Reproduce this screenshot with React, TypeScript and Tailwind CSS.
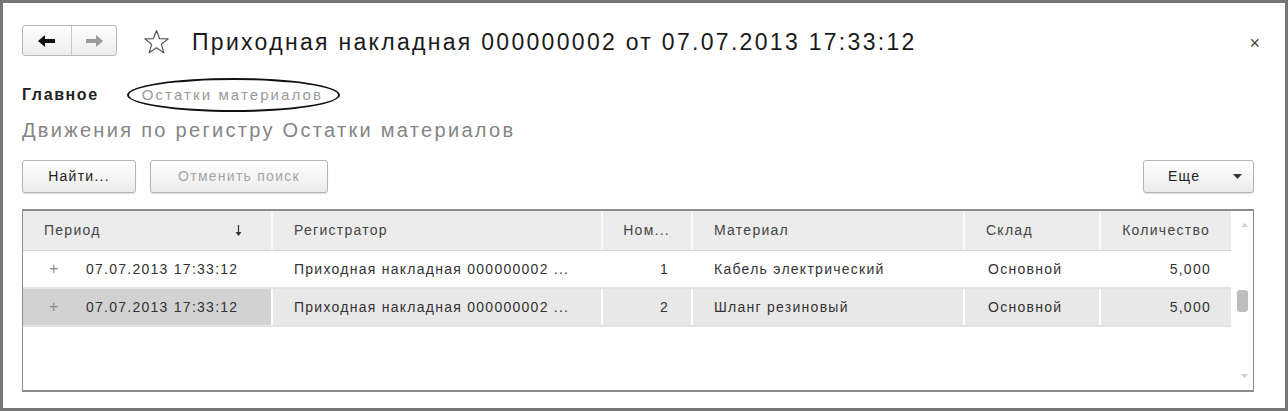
import React from 'react';

const cols = [
  { title: 'Период', w: 'w-[248px]', align: 'left' },
  { title: 'Регистратор', w: 'w-[330px]', align: 'left' },
  { title: 'Ном...', w: 'w-[90px]', align: 'right' },
  { title: 'Материал', w: 'w-[272px]', align: 'left' },
  { title: 'Склад', w: 'w-[136px]', align: 'left' },
  { title: 'Количество', w: 'w-[132px]', align: 'right' },
];

const rows = [
  { period: '07.07.2013 17:33:12', reg: 'Приходная накладная 000000002 ...', n: '1', mat: 'Кабель электрический', sklad: 'Основной', qty: '5,000', selected: false },
  { period: '07.07.2013 17:33:12', reg: 'Приходная накладная 000000002 ...', n: '2', mat: 'Шланг резиновый', sklad: 'Основной', qty: '5,000', selected: true },
];

const btnBase =
  'h-[33px] flex items-center border border-[#b4b4b4] rounded-[3px] bg-gradient-to-b from-white to-[#ececec] shadow-[0_1px_1px_rgba(0,0,0,0.12)] text-[14px] tracking-[0.09em]';

const App = () => {
  return (
    <div className="w-[1288px] h-[411px] bg-white border-[3px] border-[#777] font-['Liberation_Sans',Arial,sans-serif] text-[#333]">
      <div className="pt-[22px] pl-[19px] pr-[31px]">
        {/* Header */}
        <div className="flex items-center h-[31px]">
          <div className="flex h-[31px] w-[95px] border border-[#b8b8b8] rounded-[3px] bg-gradient-to-b from-white to-[#ececec]">
            <div className="w-[49px] flex items-center justify-center border-r border-[#c8c8c8]">
              <svg width="18" height="12" viewBox="0 0 18 12">
                <path d="M0 6 L7 0 L7 4 L17 4 L17 8 L7 8 L7 12 Z" fill="#111" />
              </svg>
            </div>
            <div className="flex-1 flex items-center justify-center">
              <svg width="18" height="12" viewBox="0 0 18 12">
                <path d="M18 6 L11 0 L11 4 L1 4 L1 8 L11 8 L11 12 Z" fill="#9a9a9a" />
              </svg>
            </div>
          </div>
          <svg width="27" height="26" viewBox="0 0 27 26" className="ml-[26px] mt-[2px]">
            <path
              d="M13.5 1.5 L16.6 9.6 L25.2 9.9 L18.4 15.3 L20.8 23.7 L13.5 18.8 L6.2 23.7 L8.6 15.3 L1.8 9.9 L10.4 9.6 Z"
              fill="none"
              stroke="#555"
              strokeWidth="1.2"
              strokeLinejoin="round"
            />
          </svg>
          <h1 className="ml-[22px] mt-[4px] text-[23px] tracking-[0.1em] text-[#1a1a1a] leading-none">
            Приходная накладная 000000002 от 07.07.2013 17:33:12
          </h1>
          <span className="ml-auto mt-[4px] text-[18px] text-[#444] leading-none mr-[-6px]">×</span>
        </div>

        {/* Tabs */}
        <div className="flex items-center h-[34px] mt-[22px]">
          <span className="text-[16px] font-bold tracking-[0.1em] text-[#222]">Главное</span>
          <span className="ml-[28px] h-[34px] pl-[13px] pr-[15px] flex items-center border-2 border-[#111] rounded-[50%] text-[15px] tracking-[0.14em] text-[#9a9a9a]">
            Остатки материалов
          </span>
        </div>

        <div className="mt-[7px] text-[20px] leading-[22px] tracking-[0.115em] text-[#858585]">
          Движения по регистру Остатки материалов
        </div>

        {/* Toolbar */}
        <div className="flex mt-[19px]">
          <button className={`${btnBase} w-[114px] justify-center text-[#222]`}>Найти...</button>
          <button className={`${btnBase} w-[178px] ml-[14px] justify-center text-[#a5a5a5]`}>Отменить поиск</button>
          <button className={`${btnBase} w-[111px] ml-auto justify-between pl-[24px] pr-[11px] text-[#222]`}>
            <span>Еще</span>
            <svg width="9" height="5" viewBox="0 0 9 5">
              <path d="M0 0 L9 0 L4.5 5 Z" fill="#333" />
            </svg>
          </button>
        </div>

        {/* Table */}
        <div className="mt-[16px] h-[183px] border-x border-t-2 border-b-2 border-[#8c8c8c] flex text-[14px] tracking-[0.09em]">
          <div className="flex flex-col">
            <div className="flex h-[40px] bg-[#ececec] border-b border-[#d2d2d2]">
              {cols.map((c, i) => (
                <div
                  key={i}
                  className={`${c.w} flex items-center px-[21px] ${i > 0 ? 'border-l-2 border-[#fafafa]' : ''} ${c.align === 'right' ? 'justify-end' : ''} text-[#444]`}
                >
                  {c.title}
                  {i === 0 && (
                    <svg width="7" height="11" viewBox="0 0 7 11" className="ml-auto mr-[8px]">
                      <path d="M3.5 0 L3.5 9" stroke="#333" strokeWidth="1.2" />
                      <path d="M0.5 7 L6.5 7 L3.5 11 Z" fill="#333" />
                    </svg>
                  )}
                </div>
              ))}
            </div>
            {rows.map((r, i) => (
              <div
                key={i}
                className={`flex h-[38px] border-b-2 border-[#e2e2e2] ${r.selected ? 'bg-[#e8e8e8]' : 'bg-white'}`}
              >
                <div className={`w-[248px] flex items-center pl-[26px] ${r.selected ? 'bg-[#d2d2d2]' : ''}`}>
                  <span className="text-[#8a8a8a] text-[16px] w-[37px]">+</span>
                  <span>{r.period}</span>
                </div>
                <div className={`w-[330px] flex items-center px-[21px] border-l-2 ${r.selected ? 'border-white' : 'border-transparent'}`}>
                  {r.reg}
                </div>
                <div className={`w-[90px] flex items-center justify-end px-[22px] border-l-2 ${r.selected ? 'border-white' : 'border-transparent'}`}>
                  {r.n}
                </div>
                <div className={`w-[272px] flex items-center px-[21px] border-l-2 ${r.selected ? 'border-white' : 'border-transparent'}`}>
                  {r.mat}
                </div>
                <div className={`w-[136px] flex items-center px-[23px] border-l-2 ${r.selected ? 'border-white' : 'border-transparent'}`}>
                  {r.sklad}
                </div>
                <div className={`w-[132px] flex items-center justify-end px-[20px] border-l-2 ${r.selected ? 'border-white' : 'border-transparent'}`}>
                  {r.qty}
                </div>
              </div>
            ))}
          </div>
          {/* Scrollbar */}
          <div className="flex-1 relative">
            <svg width="7" height="4" viewBox="0 0 7 4" className="absolute left-[10px] top-[12px]">
              <path d="M0 4 L7 4 L3.5 0 Z" fill="#cfcfcf" />
            </svg>
            <div className="absolute left-[6px] top-[79px] w-[11px] h-[22px] rounded-[3px] bg-[#bdbdbd]" />
            <svg width="7" height="4" viewBox="0 0 7 4" className="absolute left-[10px] bottom-[12px]">
              <path d="M0 0 L7 0 L3.5 4 Z" fill="#cfcfcf" />
            </svg>
          </div>
        </div>
      </div>
    </div>
  );
};

export default App;
